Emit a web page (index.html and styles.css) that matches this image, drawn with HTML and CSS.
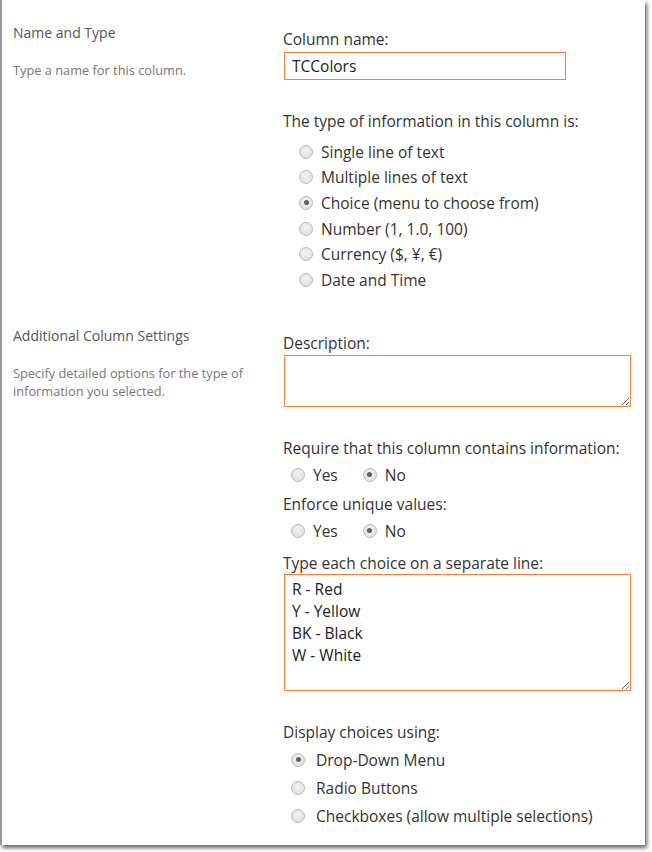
FILE: index.html
```html
<!DOCTYPE html>
<html>
<head>
<meta charset="utf-8">
<link rel="stylesheet" href="styles.css">
</head>
<body>
<div class="card">
  <section class="sec sec1">
    <div class="side">
      <div class="side-title">Name and Type</div>
      <div class="side-desc">Type a name for this column.</div>
    </div>
    <div class="main">
      <div class="lbl">Column name:</div>
      <input class="txt" type="text" value="TCColors">
      <div class="lbl lbl-gap">The type of information in this column is:</div>
      <div class="typelist">
        <label class="opt"><input type="radio" name="t"><span>Single line of text</span></label>
        <label class="opt"><input type="radio" name="t"><span>Multiple lines of text</span></label>
        <label class="opt"><input type="radio" name="t" checked><span>Choice (menu to choose from)</span></label>
        <label class="opt"><input type="radio" name="t"><span>Number (1, 1.0, 100)</span></label>
        <label class="opt"><input type="radio" name="t"><span>Currency ($, ¥, €)</span></label>
        <label class="opt"><input type="radio" name="t"><span>Date and Time</span></label>
      </div>
    </div>
  </section>
  <section class="sec sec2">
    <div class="side">
      <div class="side-title">Additional Column Settings</div>
      <div class="side-desc">Specify detailed options for the type of information you selected.</div>
    </div>
    <div class="main">
      <div class="lbl">Description:</div>
      <textarea class="area desc"></textarea>
      <div class="lbl lbl-gap">Require that this column contains information:</div>
      <div class="yesno">
        <label class="opt2"><input type="radio" name="r"><span>Yes</span></label>
        <label class="opt2"><input type="radio" name="r" checked><span>No</span></label>
      </div>
      <div class="lbl">Enforce unique values:</div>
      <div class="yesno yesno-last">
        <label class="opt2"><input type="radio" name="u"><span>Yes</span></label>
        <label class="opt2"><input type="radio" name="u" checked><span>No</span></label>
      </div>
      <div class="lbl">Type each choice on a separate line:</div>
      <textarea class="area choices">R - Red
Y - Yellow
BK - Black
W - White</textarea>
      <div class="lbl lbl-gap">Display choices using:</div>
      <div class="displist">
        <label class="opt3"><input type="radio" name="d" checked><span>Drop-Down Menu</span></label>
        <label class="opt3"><input type="radio" name="d"><span>Radio Buttons</span></label>
        <label class="opt3"><input type="radio" name="d"><span>Checkboxes (allow multiple selections)</span></label>
      </div>
    </div>
  </section>
</div>
</body>
</html>
```
FILE: styles.css
```css
html, body {
  margin: 0;
  padding: 0;
  background: #ffffff;
}
body {
  font-family: "Open Sans", "Noto Sans", sans-serif;
  color: #333;
  width: 652px;
  height: 852px;
  overflow: hidden;
}
.card {
  width: 645px;
  height: 845px;
  background: #fff;
  border-left: 2px solid #9a9a9a;
  box-shadow: 2px 3px 4px rgba(0, 0, 0, 0.6);
  box-sizing: border-box;
}
.sec {
  display: grid;
  grid-template-columns: 281px 1fr;
}
.sec1 {
  padding-top: 23px;
}
.sec2 {
  padding-top: 34px;
}
.side {
  padding-left: 11px;
}
.sec2 .side {
  margin-top: -1px;
}
.side-title {
  font-size: 14px;
  line-height: 20px;
  color: #555;
}
.side-desc {
  font-size: 12.8px;
  line-height: 18px;
  color: #777;
  width: 250px;
  margin-top: 18px;
}
.main {
  padding-top: 6px;
  display: flex;
  flex-direction: column;
  align-items: flex-start;
}
.lbl {
  font-size: 15.5px;
  line-height: 20px;
  color: #333;
  white-space: nowrap;
}
.lbl-gap {
  margin-top: 31px;
}
.txt {
  margin: 3px 0 0 1px;
  width: 282px;
  height: 28px;
  box-sizing: border-box;
  border: 1px solid #f47f45;
  outline: none;
  padding: 0 7px;
  font-family: inherit;
  font-size: 15.5px;
  color: #222;
}
.area {
  margin: 2px 0 0 1px;
  width: 347px;
  box-sizing: border-box;
  border: 1px solid #f47f45;
  outline: none;
  padding: 3px 7px;
  font-family: inherit;
  font-size: 15.5px;
  line-height: 22px;
  color: #222;
  resize: both;
  overflow: hidden;
}
.desc {
  height: 52px;
}
.choices {
  height: 117px;
  margin-top: 1px;
}
input[type="radio"] {
  appearance: none;
  -webkit-appearance: none;
  margin: 0;
  width: 14px;
  height: 14px;
  border-radius: 50%;
  border: 1px solid #bcbcbc;
  background: radial-gradient(circle at 50% 40%, #f4f4f4 0%, #e2e2e2 70%, #d4d4d4 100%);
  box-sizing: border-box;
  flex: none;
  position: relative;
}
input[type="radio"]:checked::after {
  content: "";
  position: absolute;
  left: 3.5px;
  top: 3.5px;
  width: 5px;
  height: 5px;
  border-radius: 50%;
  background: #606060;
}
.typelist {
  margin-top: 8px;
  padding-left: 16px;
  display: flex;
  flex-direction: column;
}
.opt {
  display: flex;
  align-items: center;
  gap: 8px;
  height: 25.6px;
  font-size: 15.5px;
  white-space: nowrap;
}
.yesno {
  display: flex;
  gap: 25px;
  padding-left: 8px;
  height: 28px;
  margin: 3px 0 5px;
}
.yesno-last {
  margin-bottom: 8px;
}
.opt2 {
  display: flex;
  align-items: center;
  gap: 8px;
  font-size: 15.5px;
}
.displist {
  margin-top: 4px;
  padding-left: 8px;
  display: flex;
  flex-direction: column;
}
.opt3 {
  display: flex;
  align-items: center;
  gap: 11px;
  height: 28px;
  font-size: 15.5px;
  white-space: nowrap;
}
```
